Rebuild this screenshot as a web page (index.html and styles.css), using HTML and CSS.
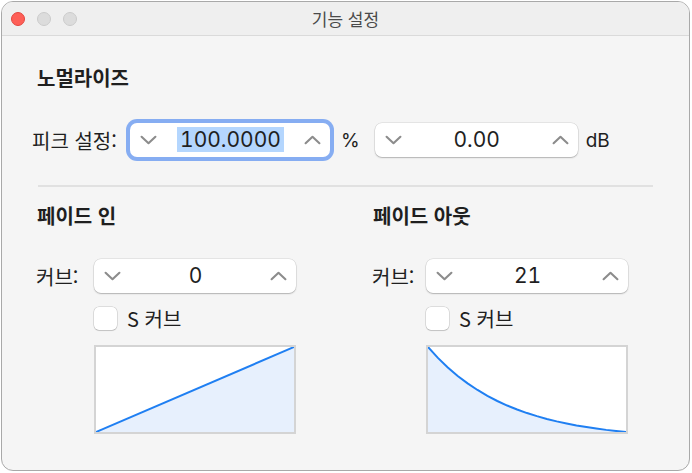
FILE: index.html
```html
<!DOCTYPE html>
<html lang="ko">
<head>
  <meta charset="UTF-8">
  <title>기능 설정</title>
  <link rel="stylesheet" href="styles.css">
</head>
<body>
  <div class="window">
    <div class="titlebar">
      <div class="lights">
        <span class="light close"></span>
        <span class="light"></span>
        <span class="light"></span>
      </div>
      <div class="title">기능 설정</div>
    </div>

    <div class="content">
      <h2 class="section-title">노멀라이즈</h2>
      <div class="row peak-row">
        <span class="label">피크 설정:</span>
        <div class="stepper focused w-200">
          <span class="chev down"><svg viewBox="0 0 16 9"><path d="M1.5 1.5 L8 7.5 L14.5 1.5"/></svg></span>
          <span class="value"><span class="selected">100.0000</span></span>
          <span class="chev up"><svg viewBox="0 0 16 9"><path d="M1.5 7.5 L8 1.5 L14.5 7.5"/></svg></span>
        </div>
        <span class="unit pct">%</span>
        <div class="stepper w-203">
          <span class="chev down"><svg viewBox="0 0 16 9"><path d="M1.5 1.5 L8 7.5 L14.5 1.5"/></svg></span>
          <span class="value">0.00</span>
          <span class="chev up"><svg viewBox="0 0 16 9"><path d="M1.5 7.5 L8 1.5 L14.5 7.5"/></svg></span>
        </div>
        <span class="unit db">dB</span>
      </div>

      <div class="divider"></div>

      <div class="columns">
        <div class="col fade-in">
          <h2 class="section-title">페이드 인</h2>
          <div class="row curve-row">
            <span class="label curve-label">커브:</span>
            <div class="stepper w-202">
              <span class="chev down"><svg viewBox="0 0 16 9"><path d="M1.5 1.5 L8 7.5 L14.5 1.5"/></svg></span>
              <span class="value">0</span>
              <span class="chev up"><svg viewBox="0 0 16 9"><path d="M1.5 7.5 L8 1.5 L14.5 7.5"/></svg></span>
            </div>
          </div>
          <label class="check">
            <span class="box"></span>
            <span>S 커브</span>
          </label>
          <div class="graph">
            <svg viewBox="0 0 200 88" preserveAspectRatio="none">
              <polygon class="area" points="0,88 200,0 200,88"/>
              <polyline class="line" points="0,88 200,0"/>
            </svg>
          </div>
        </div>

        <div class="col fade-out">
          <h2 class="section-title">페이드 아웃</h2>
          <div class="row curve-row">
            <span class="label curve-label">커브:</span>
            <div class="stepper w-202">
              <span class="chev down"><svg viewBox="0 0 16 9"><path d="M1.5 1.5 L8 7.5 L14.5 1.5"/></svg></span>
              <span class="value">21</span>
              <span class="chev up"><svg viewBox="0 0 16 9"><path d="M1.5 7.5 L8 1.5 L14.5 7.5"/></svg></span>
            </div>
          </div>
          <label class="check">
            <span class="box"></span>
            <span>S 커브</span>
          </label>
          <div class="graph">
            <svg viewBox="0 0 200 88" preserveAspectRatio="none">
              <polygon class="area" points="0,0 10,11.3 20,21.2 30,30 40,37.7 50,44.5 60,50.6 70,55.9 80,60.6 90,64.7 100,68.4 110,71.6 120,74.5 130,77 140,79.2 150,81.2 160,82.9 170,84.4 180,85.8 190,86.9 200,88 0,88"/>
              <polyline class="line" points="0,0 10,11.3 20,21.2 30,30 40,37.7 50,44.5 60,50.6 70,55.9 80,60.6 90,64.7 100,68.4 110,71.6 120,74.5 130,77 140,79.2 150,81.2 160,82.9 170,84.4 180,85.8 190,86.9 200,88"/>
            </svg>
          </div>
        </div>
      </div>
    </div>
  </div>
</body>
</html>
```

FILE: styles.css
```css
:root {
  --text: #1f1f1f;
  --chev: #8c8c8c;
  --panel: #f5f5f5;
  --blue: #1f7ff2;
  --fill: #e7f0fd;
}

* {
  margin: 0;
  padding: 0;
  box-sizing: border-box;
}

body {
  background: #fff;
  font-family: "Inter", "Noto Sans CJK KR", sans-serif;
  color: var(--text);
  padding: 1px 2px 2px 1px;
}

.window {
  width: 689px;
  height: 470px;
  border: 1px solid #a9a9a9;
  border-radius: 12px;
  background: var(--panel);
  overflow: hidden;
  display: flex;
  flex-direction: column;
}

.titlebar {
  height: 34px;
  flex-shrink: 0;
  background: #efefef;
  border-bottom: 1px solid #dadada;
  position: relative;
  display: flex;
  align-items: center;
  justify-content: center;
}

.lights {
  position: absolute;
  left: 9px;
  top: 10px;
  display: flex;
  gap: 12px;
}

.light {
  width: 14px;
  height: 14px;
  border-radius: 50%;
  background: #dcdcdc;
  border: 1px solid #cbcbcb;
}

.light.close {
  background: #fe5f57;
  border-color: #e2463f;
}

.title {
  font-size: 17px;
  color: #4a4a4a;
  font-family: "Noto Sans CJK KR", sans-serif;
}

.content {
  padding: 0 34px;
}

.section-title {
  font-family: "Noto Sans CJK KR", sans-serif;
  font-size: 20px;
  font-weight: 700;
  line-height: 22px;
  padding-left: 1px;
}

.content > .section-title {
  margin-top: 31px;
}

.row {
  display: flex;
  align-items: center;
}

.label,
.unit,
.check {
  font-family: "Noto Sans CJK KR", sans-serif;
  font-size: 20px;
}

.unit {
  font-family: "Inter", sans-serif;
  font-size: 19px;
}

.peak-row {
  margin-top: 34px;
  margin-left: -4px;
}

.peak-row .label {
  width: 98px;
}

.pct {
  margin: 0 15px 0 11px;
}

.db {
  margin-left: 8px;
}

.stepper {
  height: 34px;
  background: #fff;
  border-radius: 7px;
  box-shadow: 0 0 0 0.5px rgba(0, 0, 0, 0.13), 0 1px 1.5px rgba(0, 0, 0, 0.22);
  display: flex;
  align-items: center;
  padding: 0 9px 0 10px;
}

.stepper.focused {
  box-shadow: 0 0 0 4px #86adf2;
}

.w-200 { width: 200px; }
.w-202 { width: 202px; }
.w-203 { width: 203px; }

.chev {
  width: 17px;
  height: 10px;
  display: flex;
}

.chev svg {
  width: 17px;
  height: 10px;
  fill: none;
  stroke: var(--chev);
  stroke-width: 2;
  stroke-linecap: round;
  stroke-linejoin: round;
}

.value {
  flex: 1;
  text-align: center;
  font-size: 21px;
  font-variant-numeric: tabular-nums;
  line-height: 26px;
}

.selected {
  background: #b4d6fe;
  padding: 0 3px;
}

.divider {
  height: 2px;
  background: #e1e1e1;
  margin: 28px 2px 0;
}

.columns {
  display: grid;
  grid-template-columns: 336px 1fr;
}

.col .section-title {
  margin-top: 18px;
}

.curve-row {
  margin-top: 32px;
}

.fade-in { --indent: 58px; }
.fade-out { --indent: 54px; }

.curve-label {
  width: var(--indent);
}

.check {
  display: flex;
  align-items: center;
  gap: 10px;
  margin-top: 14px;
  margin-left: var(--indent);
  height: 23px;
}

.box {
  width: 23px;
  height: 23px;
  background: #fff;
  border-radius: 5px;
  box-shadow: 0 0 0 0.5px rgba(0, 0, 0, 0.2), 0 1px 1px rgba(0, 0, 0, 0.12);
}

.graph {
  width: 202px;
  height: 89px;
  margin-top: 15px;
  margin-left: var(--indent);
  background: #fff;
  border: 2px solid #d4d4d4;
}

.graph svg {
  display: block;
  width: 100%;
  height: 100%;
}

.graph .area {
  fill: var(--fill);
}

.graph .line {
  fill: none;
  stroke: var(--blue);
  stroke-width: 2;
  vector-effect: non-scaling-stroke;
}
```
